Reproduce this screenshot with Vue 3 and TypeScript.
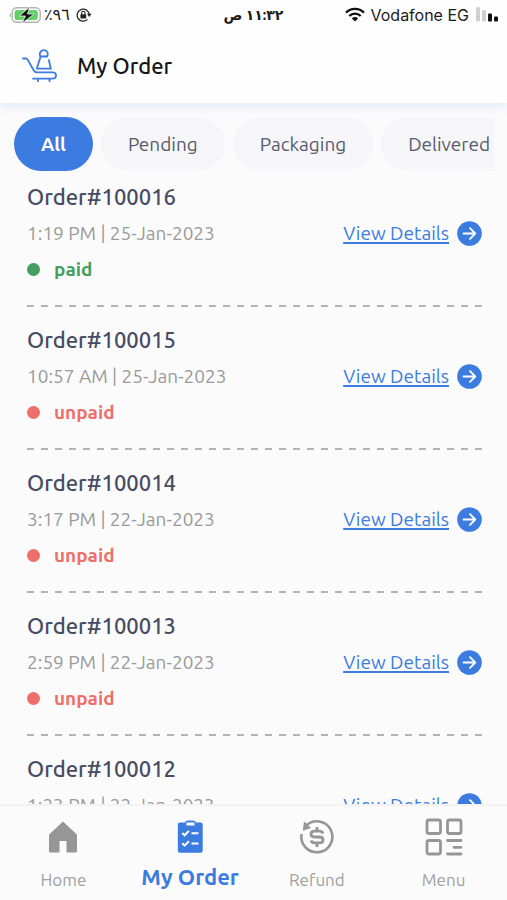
<script setup lang="ts">
import { ref } from 'vue'

interface Order {
  id: number
  placed: string
  status: 'paid' | 'unpaid'
}

const tabs: string[] = ['All', 'Pending', 'Packaging', 'Delivered']
const activeTab = ref<string>('All')

const orders: Order[] = [
  { id: 100016, placed: '1:19 PM | 25-Jan-2023', status: 'paid' },
  { id: 100015, placed: '10:57 AM | 25-Jan-2023', status: 'unpaid' },
  { id: 100014, placed: '3:17 PM | 22-Jan-2023', status: 'unpaid' },
  { id: 100013, placed: '2:59 PM | 22-Jan-2023', status: 'unpaid' },
  { id: 100012, placed: '1:23 PM | 22-Jan-2023', status: 'unpaid' },
]
</script>

<template>
  <div class="screen">
    <header class="top">
      <div class="status">
        <div class="status-side">
          <svg width="34" height="18" viewBox="0 0 34 18" aria-hidden="true">
            <path d="M2.8 6.500a3 3 0 0 0 0 5z" fill="#b5b5b5" />
            <rect x="4.200" y="1.700" width="28" height="14.600" rx="4.500" fill="#fff" stroke="#b2b2b2" stroke-width="1.400" />
            <rect x="6.600" y="4" width="23.200" height="10" rx="2.200" fill="#63cf68" />
            <path d="M21.500 1 11.500 10h6L14 17.200 26 8h-6.500z" fill="#111" stroke="#fff" stroke-width=".7" />
          </svg>
          <span class="battery-text">٪٩٦</span>
          <svg class="lock" width="16" height="16" viewBox="0 0 16 16" aria-hidden="true">
            <path d="M11.500 12.400A6 6 0 1 1 13.200 8" fill="none" stroke="#222" stroke-width="1.300" />
            <path d="M11 6.800h4.600l-2.300 3.200z" fill="#222" />
            <rect x="4.400" y="7.200" width="5.800" height="4.200" rx=".6" fill="#222" />
            <path d="M5.600 7.400V6a1.700 1.700 0 0 1 3.400 0v1.400" fill="none" stroke="#222" stroke-width="1.100" />
          </svg>
        </div>
        <span class="clock" dir="rtl">١١:٣٢ ص</span>
        <div class="status-side end">
          <svg width="20" height="15" viewBox="0 0 20 15" aria-hidden="true">
            <g fill="none" stroke="#111" stroke-width="2.300">
              <path d="M1 5.600a12.700 12.700 0 0 1 18 0" />
              <path d="M4.300 9a8 8 0 0 1 11.400 0" />
            </g>
            <path d="M10 14.500 6.900 11.400a4.400 4.400 0 0 1 6.200 0z" fill="#111" />
          </svg>
          <span class="carrier">Vodafone EG</span>
          <svg width="24" height="15" viewBox="0 0 24 15" aria-hidden="true">
            <rect x="1" y="0" width="4" height="14.500" rx="1.500" fill="#cfcfcf" />
            <rect x="7" y="3" width="4" height="11.500" rx="1.500" fill="#cfcfcf" />
            <rect x="13" y="6.500" width="4" height="8" rx="1" fill="#111" />
            <rect x="19" y="9.500" width="4" height="5" rx="1" fill="#111" />
          </svg>
        </div>
      </div>
      <div class="title-row">
        <svg width="36" height="34" viewBox="0 0 36 34" fill="none" stroke="#3c7be0" stroke-width="1.800" stroke-linecap="round" stroke-linejoin="round" aria-hidden="true">
          <path d="M1 9.500h2.500q1.500 0 2.300 1.400L11.500 21q1.300 2.300 3.500 2.300h15.500q3.500 0 3.500 3.200t-3.500 3.200H11" />
          <path d="M26.800 11 28.900 19.700H14.800L18.600 7.500h6.200" />
          <path d="M18.600 7.500a4 4 0 1 1 7.200-2.300q0 1.500-1 2.300" />
          <path d="M16 30v2.200M27.500 30v2.200" />
        </svg>
        <h1>My Order</h1>
      </div>
    </header>

    <main class="content">
      <nav class="tabs" aria-label="Order status">
        <button
          v-for="tab in tabs"
          :key="tab"
          type="button"
          class="tab"
          :class="{ active: tab === activeTab }"
          @click="activeTab = tab"
        >{{ tab }}</button>
      </nav>

      <ul class="orders">
        <li v-for="order in orders" :key="order.id" class="order">
          <div class="order-body">
            <div class="info">
              <h2>Order#{{ order.id }}</h2>
              <p class="placed">{{ order.placed }}</p>
              <p class="state" :class="order.status"><span class="dot"></span>{{ order.status }}</p>
            </div>
            <a href="#" class="details">
              <span class="details-text">View Details</span>
              <svg width="25" height="25" viewBox="0 0 25 25" aria-hidden="true">
                <circle cx="12.500" cy="12.500" r="12.300" fill="#3c7be0" />
                <path d="M6.500 12.500h11.500M13 7.200l5.300 5.300-5.300 5.300" fill="none" stroke="#fff" stroke-width="1.800" stroke-linecap="round" stroke-linejoin="round" />
              </svg>
            </a>
          </div>
          <div class="dashes"></div>
        </li>
      </ul>
    </main>

    <nav class="bottom" aria-label="Main">
      <a href="#" class="item">
        <svg width="38" height="38" viewBox="0 0 38 38" aria-hidden="true">
          <path d="M19 3.500 5.700 16q-.7.700-.7 1.600V33q0 1.500 1.500 1.500H15.500V23h7v11.500h9q1.500 0 1.500-1.500V17.600q0-.9-.7-1.600z" fill="#969696" />
        </svg>
        <span>Home</span>
      </a>
      <a href="#" class="item current" aria-current="page">
        <svg width="38" height="38" viewBox="0 0 38 38" aria-hidden="true">
          <path d="M9 4.500h5q.6-2 3-2h5q2.400 0 3 2h4.500q2.200 0 2.200 2.200v25.800q0 2.200-2.200 2.200H9q-2.200 0-2.200-2.200V6.700Q6.800 4.500 9 4.500z" fill="#3c7be0" />
          <path d="M15.500 4.500h8v3h-8z" fill="#fff" />
          <g fill="none" stroke="#fff" stroke-width="2">
            <path d="m11.300 15 2.300 2.300 4.300-4.300M20.500 15.300h7M11.300 25.300l2.300 2.300 4.300-4.300M20.500 25.600h7" />
          </g>
        </svg>
        <span>My Order</span>
      </a>
      <a href="#" class="item">
        <svg width="38" height="38" viewBox="0 0 38 38" fill="none" stroke="#969696" aria-hidden="true">
          <path d="M8 7.700A15.500 15.500 0 1 1 3.600 16" stroke-width="2.600" />
          <path d="M6 3.200 4.800 12.800 13 10z" fill="#969696" stroke="none" />
          <path d="M25 15.500q-.8-2.300-3.500-2.300h-5q-3.500 0-3.500 2.900t3.500 2.900h5q3.500 0 3.500 2.900t-3.500 2.900h-5q-2.700 0-3.500-2.300M19 9v4M19 25v4" stroke-width="2.800" />
        </svg>
        <span>Refund</span>
      </a>
      <a href="#" class="item">
        <svg width="38" height="38" viewBox="0 0 38 38" fill="none" stroke="#969696" stroke-width="2.800" stroke-linecap="round" aria-hidden="true">
          <rect x="2" y="2" width="13.500" height="13.500" rx="2" />
          <rect x="22.500" y="2" width="13.500" height="13.500" rx="2" />
          <rect x="2" y="22.500" width="13.500" height="13.500" rx="2" />
          <path d="M22.500 22.500H36M29 29.300h7M22.500 36H36" />
        </svg>
        <span>Menu</span>
      </a>
    </nav>
  </div>
</template>

<style>
body {
  margin: 0;
  background: #fbfbfc;
}
</style>

<style scoped>
* {
  box-sizing: border-box;
}

.screen {
  display: flex;
  flex-direction: column;
  height: 100vh;
  overflow: hidden;
  background: #fbfbfc;
  color: #4a4f63;
  font-family: Ubuntu, "Noto Sans", "DejaVu Sans", sans-serif;
}

.top {
  flex: none;
  background: #fefefe;
  box-shadow: 0 2px 10px rgba(60, 110, 230, 0.16);
}

.status {
  display: grid;
  grid-template-columns: 1fr auto 1fr;
  align-items: center;
  height: 29px;
  padding: 0 8px;
  color: #1c1c1c;
}

.status-side {
  display: flex;
  align-items: center;
  gap: 2px;
}

.end {
  justify-content: flex-end;
  gap: 6px;
}

.battery-text {
  font-size: 16px;
}

.lock {
  margin-left: 4px;
}

.clock {
  font-size: 14px;
  font-weight: 600;
}

.carrier {
  font-family: Inter, sans-serif;
  font-size: 16px;
}

.title-row {
  display: flex;
  align-items: center;
  gap: 19px;
  height: 74px;
  padding: 0 22px;
}

h1 {
  margin: 0;
  color: #161616;
  font-size: 22px;
  font-weight: 500;
  line-height: 28px;
}

.content {
  flex: 1;
  min-height: 0;
  overflow: hidden;
  padding-top: 14px;
}

.tabs {
  display: flex;
  gap: 8px;
  margin: 0 13px 0 14px;
  overflow: hidden;
}

.tab {
  flex: none;
  height: 54px;
  padding: 0 27px;
  border: 0;
  border-radius: 27px;
  background: #f6f6f9;
  color: #565a6c;
  font-family: inherit;
  font-size: 19px;
}

.active {
  background: #3c7be0;
  color: #fff;
  font-weight: 700;
}

.orders {
  margin: 0;
  padding: 13px 25px 0 27px;
  list-style: none;
}

.order-body {
  display: flex;
  align-items: center;
  justify-content: space-between;
}

.info {
  display: grid;
  gap: 10px;
  line-height: 26px;
}

h2 {
  margin: 0;
  color: #474c62;
  font-size: 22px;
  font-weight: 500;
}

p {
  margin: 0;
}

.placed {
  color: #9a9a9a;
  font-size: 19px;
}

.state {
  display: flex;
  align-items: center;
  gap: 14px;
  font-size: 19px;
  font-weight: 700;
}

.dot {
  width: 13px;
  height: 13px;
  border-radius: 50%;
  background: currentColor;
}

.paid {
  color: #459d60;
}

.unpaid {
  color: #ee6f69;
}

.details {
  display: flex;
  align-items: center;
  gap: 8px;
  color: #3c7be0;
  font-size: 19px;
  line-height: 26px;
  text-decoration: none;
}

.details-text {
  text-decoration: underline;
  text-decoration-thickness: 2px;
  text-underline-offset: 2px;
}

.dashes {
  height: 2px;
  margin: 23px 0 20px;
  background: repeating-linear-gradient(90deg, #b4b4b4 0 7px, transparent 7px 14px);
}

.bottom {
  display: grid;
  grid-template-columns: repeat(4, 1fr);
  flex: none;
  height: 96px;
  border-top: 2px solid #f2f2f3;
  background: #fbfbfc;
}

.item {
  display: flex;
  flex-direction: column;
  align-items: center;
  gap: 12px;
  padding-top: 12px;
  color: #a0a0a0;
  font-size: 17px;
  line-height: 24px;
  text-decoration: none;
}

.current {
  gap: 9px;
  color: #3c7be0;
  font-size: 22px;
  font-weight: 700;
}
</style>
